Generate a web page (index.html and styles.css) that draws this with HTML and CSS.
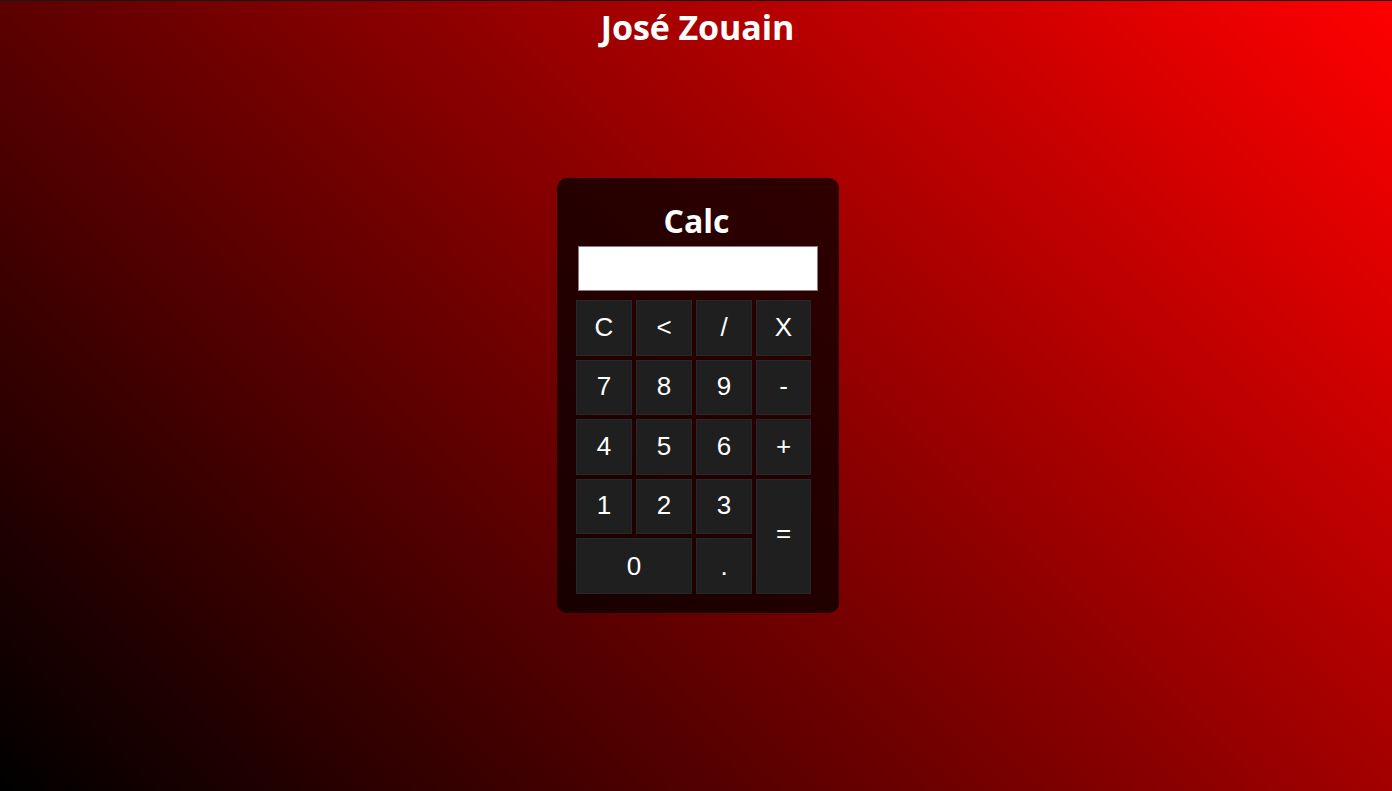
FILE: index.html
```html
<!DOCTYPE html>
<html lang="pt">
<head>
<meta charset="utf-8">
<title>Calc</title>
<link rel="stylesheet" href="styles.css">
</head>
<body>
<div class="page">
  <header class="top">
    <h1 class="name">José Zouain</h1>
  </header>
  <main class="center">
    <div class="calc">
      <h2 class="calc-title">Calc</h2>
      <input class="display" type="text" value="">
      <div class="keys">
        <button class="key">C</button>
        <button class="key">&lt;</button>
        <button class="key">/</button>
        <button class="key">X</button>
        <button class="key">7</button>
        <button class="key">8</button>
        <button class="key">9</button>
        <button class="key">-</button>
        <button class="key">4</button>
        <button class="key">5</button>
        <button class="key">6</button>
        <button class="key">+</button>
        <button class="key">1</button>
        <button class="key">2</button>
        <button class="key">3</button>
        <button class="key key-eq">=</button>
        <button class="key key-zero">0</button>
        <button class="key key-dot">.</button>
      </div>
    </div>
  </main>
  <div class="spacer"></div>
</div>
</body>
</html>
```

FILE: styles.css
```css
html, body {
  margin: 0;
  padding: 0;
  height: 100%;
}

body {
  background: linear-gradient(45deg, #000000, #ff0000);
  font-family: "Open Sans", "Noto Sans", sans-serif;
  color: #ffffff;
  overflow: hidden;
}

.page {
  height: 100vh;
  box-sizing: border-box;
  border-top: 1px solid #16161c;
  display: grid;
  grid-template-rows: 50px 1fr 51px;
}

.top {
  display: flex;
  justify-content: center;
  padding-left: 3px;
}

.name {
  margin: 0;
  padding-top: 4px;
  font-size: 34px;
  font-weight: 700;
  line-height: 44px;
  letter-spacing: -0.1px;
}

.center {
  display: flex;
  align-items: center;
  justify-content: center;
}

.calc {
  width: 236px;
  margin-left: 4px;
  padding: 19px 27px 19px 19px;
  background: rgba(0, 0, 0, 0.72);
  border-radius: 10px;
  display: flex;
  flex-direction: column;
}

.calc-title {
  margin: 0;
  padding-left: 5px;
  text-align: center;
  font-size: 32px;
  font-weight: 700;
  line-height: 48px;
  height: 49px;
  letter-spacing: 0;
}

.display {
  box-sizing: border-box;
  width: 240px;
  height: 45px;
  margin: 0 0 9px 2px;
  border: 1px solid #8a7e7e;
  border-radius: 0;
  background: #ffffff;
  padding: 0 4px;
  font-size: 20px;
}

.keys {
  display: grid;
  grid-template-columns: 56px 56px 56px 55px;
  grid-auto-rows: 55.25px;
  column-gap: 4px;
  row-gap: 4.25px;
}

.key {
  margin: 0;
  padding: 0 0 3px 0;
  background: #1f1f1f;
  border: 1px solid #282828;
  color: #ffffff;
  font-family: "Liberation Sans", Arial, sans-serif;
  font-size: 26px;
  line-height: 1;
  display: flex;
  align-items: center;
  justify-content: center;
}

.key-eq {
  grid-column: 4;
  grid-row: 4 / span 2;
  padding-bottom: 7px;
}

.key-zero {
  grid-column: 1 / span 2;
  grid-row: 5;
  padding-bottom: 1px;
}

.key-dot {
  grid-column: 3;
  grid-row: 5;
  padding-bottom: 1px;
}
```
